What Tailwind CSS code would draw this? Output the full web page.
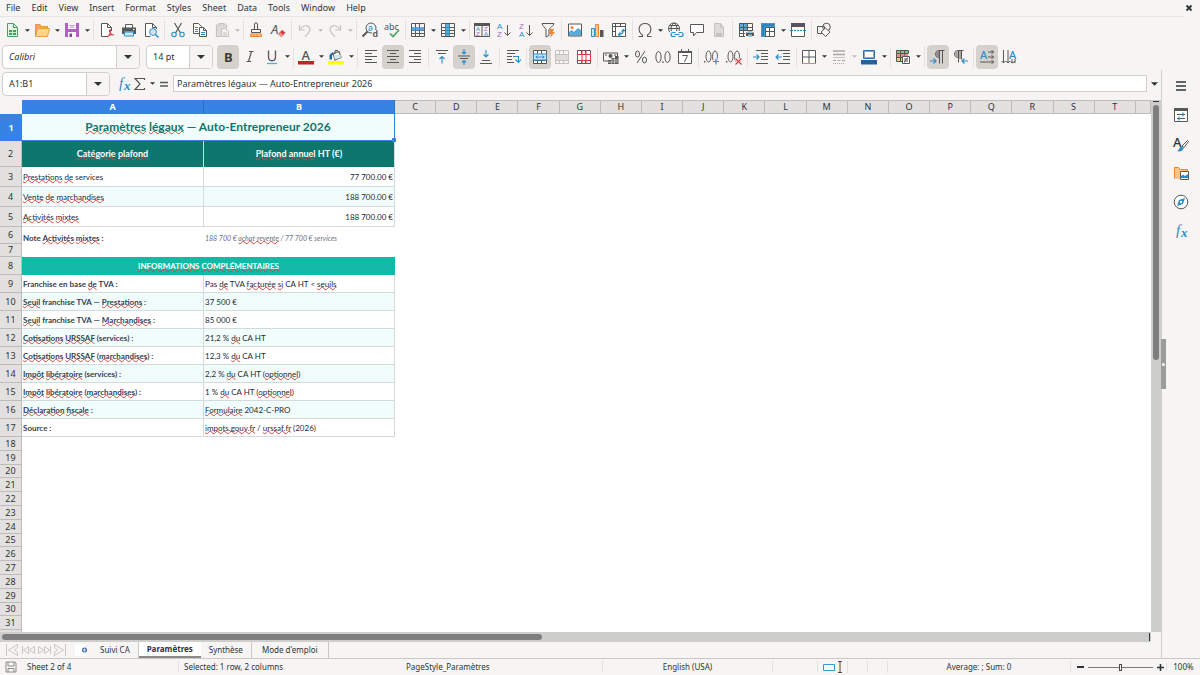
<!DOCTYPE html>
<html lang="en">
<head>
  <meta charset="UTF-8">
  <meta name="viewport" content="width=device-width, initial-scale=1.0">
  <title>Suivi CA - Calc</title>
  <script src="https://cdn.jsdelivr.net/npm/@tailwindcss/browser@4"></script>
</head>
<body class="bg-[#f6f5f4] font-['Noto_Sans',sans-serif] text-[9px] leading-3 text-[#2e3436]">
  <div class="h-screen flex flex-col overflow-hidden">
    <!-- Menu bar -->
    <div class="flex items-center justify-between h-4 shrink-0 pl-1.5 pr-[7px]">
      <nav id="menu" class="flex gap-[11px]"></nav>
      <button aria-label="Close" class="w-2 h-2 flex items-center justify-center">
        <svg class="w-2 h-2" viewBox="0 0 8 8" fill="none" stroke="#2e3436" stroke-width="1.8"><path d="M1.5 1.5l5 5M6.5 1.5l-5 5"/></svg>
      </button>
    </div>

    <!-- Standard toolbar -->
    <div id="standardBar" class="flex items-center h-[27px] shrink-0 pl-px mr-4 border-t border-[#e6e5e3]"></div>

    <!-- Formatting toolbar -->
    <div class="flex items-center h-[27px] shrink-0 pl-0.5">
      <div class="flex h-6 w-[138px] mr-1.5 rounded border border-[#d3d0cc] bg-white overflow-hidden">
        <input aria-label="Font name" value="Calibri" class="min-w-0 flex-1 px-1.5 italic outline-none">
        <button aria-label="Font list" class="w-[23px] flex items-center justify-center bg-[#f6f5f4] border-l border-[#d3d0cc]"><svg class="w-2 h-1" viewBox="0 0 8 4"><path d="M0 0h8L4 4z" fill="#2e3436"/></svg></button>
      </div>
      <div class="flex h-6 w-[67px] mr-1 rounded border border-[#d3d0cc] bg-white overflow-hidden">
        <input aria-label="Font size" value="14 pt" class="min-w-0 flex-1 px-1.5 outline-none">
        <button aria-label="Size list" class="w-[23px] flex items-center justify-center bg-[#f6f5f4] border-l border-[#d3d0cc]"><svg class="w-2 h-1" viewBox="0 0 8 4"><path d="M0 0h8L4 4z" fill="#2e3436"/></svg></button>
      </div>
      <div id="formatBar" class="flex items-center"></div>
    </div>

    <div class="flex flex-1 min-h-0">
      <div class="flex flex-col flex-1 min-w-0">
        <!-- Formula bar -->
        <div class="flex items-center h-[27px] shrink-0 pl-0.5 mb-[3px]">
          <div class="flex h-6 w-[108px] shrink-0 rounded border border-[#d3d0cc] bg-white overflow-hidden">
            <input aria-label="Name box" value="A1:B1" class="min-w-0 flex-1 px-1.5 outline-none">
            <button aria-label="Name list" class="w-[23px] flex items-center justify-center bg-[#f6f5f4] border-l border-[#d3d0cc]"><svg class="w-2 h-1" viewBox="0 0 8 4"><path d="M0 0h8L4 4z" fill="#2e3436"/></svg></button>
          </div>
          <div id="formulaBar" class="flex items-center w-[63px] shrink-0 pl-1.5"></div>
          <input aria-label="Formula" value="Paramètres légaux — Auto-Entrepreneur 2026" class="flex-1 min-w-0 h-[17px] px-[3px] bg-white border border-[#d3d0cc] outline-none">
          <button aria-label="Expand formula bar" class="w-3.5 h-4 flex items-center justify-center"><svg class="w-[7px] h-1" viewBox="0 0 8 4"><path d="M0 0h8L4 4z" fill="#2e3436"/></svg></button>
        </div>

        <!-- Sheet -->
        <div class="flex flex-1 min-h-0">
          <div class="flex-1 min-w-0 overflow-hidden bg-white">
            <table class="w-full table-fixed border-separate border-spacing-0">
              <colgroup id="cols"></colgroup>
              <thead><tr id="colHeads" class="h-3.5"></tr></thead>
              <tbody id="rows"></tbody>
            </table>
          </div>
          <!-- Vertical scroll bar -->
          <div class="w-2.5 shrink-0 bg-[#cdcdcc] flex flex-col items-center pt-px">
            <div class="w-1.5 h-px mb-[3px] bg-[#2e3436]"></div>
            <div class="w-1.5 h-[48%] rounded-full bg-[#7d7e7d]"></div>
          </div>
        </div>

        <!-- Horizontal scroll bar -->
        <div class="flex items-center justify-between h-2.5 shrink-0 mr-2.5 pl-0.5 pr-px bg-[#cdcdcc]">
          <div class="w-[47%] h-1.5 rounded-full bg-[#7d7e7d]"></div>
          <div class="w-px h-2 bg-[#2e3436]"></div>
        </div>

        <!-- Sheet tabs -->
        <div class="flex items-center h-4 shrink-0 pl-1.5 text-[8px]">
          <svg class="w-[61px] h-3.5 mr-2" viewBox="0 0 61 14" fill="none" stroke="#c9c8c6" stroke-width="1">
            <path d="M.5 1v12M11.500 1.500v3l-3 2.500 3 2.500v3L2.500 7zM16.500 3v8M22.500 3.500v7L17.500 7zM28.500 3.500v7L23.500 7zM32.500 3.500v7L37.500 7zM38.500 3.500v7L43.500 7zM44.500 3v8M48.500 1.500v3l3 2.500-3 2.500v3l9-5.500zM59.500 1v12"/>
          </svg>
          <button aria-label="Add sheet" class="w-3 h-3.5 mr-[13px]">
            <svg class="w-3 h-3.5" viewBox="0 0 12 14"><path d="M0 1h10v12H0z" fill="#fff"/><circle cx="9.500" cy="7" r="2.500" fill="#3a6fb5"/><path d="M9.500 5.500v3M8 7h3" stroke="#fff" stroke-width=".8"/></svg>
          </button>
          <button class="h-4 pr-2 border-r border-[#c9c8c6]">Suivi CA</button>
          <button class="h-4 w-[62px] bg-white border-b-2 border-[#8a8a88] font-bold">Paramètres</button>
          <button class="h-4 px-2 border-r border-[#c9c8c6]">Synthèse</button>
          <button class="h-4 px-2.5 border-r border-[#c9c8c6]">Mode d'emploi</button>
        </div>
      </div>

      <!-- Sidebar -->
      <aside class="relative w-[39px] shrink-0 border-l border-[#d0cfcd]">
        <div id="sidebar" class="flex flex-col items-center pt-px"></div>
        <button aria-label="Hide sidebar" class="absolute -left-px top-[269px] w-[5px] h-[50px] bg-[#9b9b9a] flex items-center justify-center">
          <span class="w-[3px] h-[3px] rounded-full bg-white"></span>
        </button>
      </aside>
    </div>

    <!-- Status bar -->
    <div class="flex items-center h-[17px] shrink-0 border-t border-[#c9c8c6] text-[8px]">
      <div class="w-[22px] flex justify-center">
        <svg class="w-3 h-3" viewBox="0 0 12 12" fill="none" stroke="#8e8e8c"><path d="M1 1h9l1 1v9H1zM3 1v4h6V1M3 11V7.500h6V11"/></svg>
      </div>
      <div class="w-[157px] pl-[5px] border-r border-[#e3e2e0]">Sheet 2 of 4</div>
      <div class="w-[222px] pl-[5px]">Selected: 1 row, 2 columns</div>
      <div class="w-[202px] pl-[5px] border-r border-[#e3e2e0]">PageStyle_Paramètres</div>
      <div class="w-[170px] text-center border-r border-[#e3e2e0]">English (USA)</div>
      <div class="w-[45px] h-3 border-r border-[#e3e2e0]"></div>
      <div class="w-[30px] h-3 flex items-center justify-center gap-0.5 border-r border-[#e3e2e0]">
        <svg class="w-3 h-2" viewBox="0 0 12 8" fill="none" stroke="#3d96c9"><path d="M.5 1.500h11v6H.5z"/></svg>
        <svg class="w-1.5 h-3" viewBox="0 0 6 12" fill="none" stroke="#4a4a48"><path d="M1 .5h4M3 .5v11M1 11.500h4"/></svg>
      </div>
      <div class="w-5 h-3 border-r border-[#e3e2e0]"></div>
      <div class="w-5 h-3 border-r border-[#e3e2e0]"></div>
      <div class="flex-1 text-center border-r border-[#e3e2e0]">Average: ; Sum: 0</div>
      <div class="flex items-center gap-1 w-24 pl-1.5 border-r border-[#e3e2e0]">
        <button aria-label="Zoom out" class="w-[7px] h-2 flex items-center"><span class="w-[7px] h-0.5 bg-[#2e3436]"></span></button>
        <div class="relative w-[65px] h-px bg-[#7a7a78]">
          <span class="absolute left-[31px] -top-[3px] w-[3px] h-[7px] border border-[#4a4a48] bg-[#f6f5f4]"></span>
        </div>
        <button aria-label="Zoom in" class="w-[7px] h-2 flex items-center">
          <svg class="w-[7px] h-[7px]" viewBox="0 0 7 7" stroke="#2e3436" stroke-width="1.600"><path d="M0 3.500h7M3.500 0v7"/></svg>
        </button>
      </div>
      <div class="w-[33px] text-center">100%</div>
    </div>
  </div>

  <script>
    // Icon shapes, all on a 16x16 canvas
    const K = '#575755', B = '#2a8ccb', G = '#45a35c', O = '#ed8733', R = '#d83b3b', P = '#b35fc4', X = '#c4c3c1';
    const line = (d, c = K, w = 1) => `<path d="${d}" fill="none" stroke="${c}" stroke-width="${w}"/>`;
    const fill = (d, c) => `<path d="${d}" fill="${c}"/>`;
    const letter = (x, y, s, c, size, extra = '') => `<text x="${x}" y="${y}" fill="${c}" font-size="${size}" ${extra}>${s}</text>`;
    const arial = 'font-family="Liberation Sans"';
    const grid = (c = K) => line('M1.500 1.500h13v13h-13zM1.500 5.500h13M1.500 8.500h13M1.500 11.500h13M5.500 1.500v13M9.500 1.500v13', c);

    const icons = {
      new: fill('M3 1h7l4 4v10H3z', '#eaf6ec') + line('M3.500 1.500h6l4 4v9h-10zM9.500 1.500v4h4', G) + fill('M5 8h7v5H5z', G) + line('M5 10.500h7M8.500 8v5', '#fff', .7),
      open: fill('M1 2h5l1.500 2H14v10H1z', '#f3a64e') + fill('M3.500 6H16l-2.500 8.500H1z', '#fbd48d') + line('M1.500 14V2.500h4.500l1.500 2h6V6M3.500 6.500h12l-2 8h-12z', '#e8963a', .9),
      save: fill('M1 1h14v14H1z', '#b45fc6') + fill('M4 1h8v6H4z', '#fff') + line('M5.500 3.500h5M5.500 5.200h5', '#b45fc6', .7) + fill('M4 10h8v5H4z', '#fff') + fill('M5.500 11.500h2.500V15H5.500z', '#8d3f9f'),
      pdf: fill('M2 1h8l3 4v10H2z', '#fff') + line('M9 14.500H2.500v-13h6l4 4V9M8.500 1.500v4h4') + line('M8 15c2-1 3.500-4 3.500-6.500 0-1-1.200-1 -1 .3.5 2.500 2.300 4.200 4.500 4.200 0 0-4-1-7 2', R, 1.100),
      print: fill('M4 2h8v4H4z', '#fff') + line('M4.500 6V2.500h7V6') + fill('M1 5.500h14V12h-2v-2H3v2H1z', K) + fill('M3.500 9.500h9V14h-9z', '#cfe6f6') + line('M3.500 10h9v4h-9z', B) + fill('M12 7h1.500v1H12z', '#fff'),
      preview: fill('M2 1h7l4 4v10H2z', '#fff') + line('M13.500 7V5.500l-4-4h-7v13h5M9.500 1.500v4h4') + '<circle cx="10" cy="10" r="3.400" fill="#cfe6f6" stroke="#2a8ccb"/>' + line('M12.500 12.500l3 3', B, 1.500),
      cut: line('M4.500 1l6 10M11.500 1l-6 10', K, 1.200) + '<g fill="none" stroke="#2a8ccb" stroke-width="1.100"><circle cx="4" cy="12.500" r="2.200"/><circle cx="12" cy="12.500" r="2.200"/></g>',
      copy: fill('M1 2h6l2 2v8H1z', '#fff') + line('M1.500 1.500h5l3 3v7h-8z') + line('M3 5.500h3M3 7.500h3M3 9.500h3', B) + fill('M7 5h5l3 3v7H7z', '#fff') + line('M7.500 5.500h4l3 3v6h-7zM11.500 5.500v3h3') + line('M9 10.500h4M9 12.500h4', B),
      paste: line('M2.500 3h10v11.500h-10zM5 3.500V1.500h5v2z', X, 1.200) + fill('M3 3.500h9V14H3z', '#dddcda') + fill('M7 6h5l3 3v6H7z', '#f3f2f0') + line('M7.500 6.500h4l3 3v5h-7zM9 11h4M9 13h4', X),
      brush: line('M6.500 7V2c0-1.500 3-1.500 3 0v5') + line('M3.500 7.500h9v3h-9z') + fill('M3 11h10l1 4H2z', '#f6b97a') + line('M3.500 10.500l-1 4h11l-1-4M6 12v2.500M9 12v2.500', O),
      clear: letter(1, 12, 'A', K, 13, 'font-style="italic"') + fill('M8 12l4-4 3.500 2.500-4 4.500z', R) + fill('M8 12l2-2 3.300 3-1.800 2z', '#f08a8a'),
      undo: line('M2.500 3v5h5M3 7.500C5 4 9 2.500 11.500 4.500c3.500 3 .5 6.500-3.500 10', X, 1.100),
      redo: line('M13.500 3v5h-5M13 7.500C11 4 7 2.500 4.500 4.500 1 7.500 4 11 8 14.500', X, 1.100),
      find: '<circle cx="9" cy="6" r="5" fill="#eef6fb" stroke="#575755"/>' + line('M5.500 9.500l-5 5', K, 2) + letter(6, 8.500, 'a', B, 9, arial) + fill('M10 8h6v8h-6z', '#f6f5f4') + letter(10.500, 15, 'd', K, 9, arial + ' font-weight="bold"'),
      spell: letter(0, 8, 'abc', K, 9) + line('M6 11.500l3 3 6-6.500', G, 1.600),
      row: grid() + fill('M2 5h12v3.500H2z', '#56aee0') + line('M5.500 5v3.500M9.500 5v3.500', B),
      col: grid() + fill('M5.500 2h4v12h-4z', '#56aee0') + line('M5.500 5.500h4M5.500 8.500h4M5.500 11.500h4', B),
      sort: fill('M0 1h16v3H0z', K) + line('M.5 1.500h15v13H.5zM8 4v11') + letter(2, 9, 'A', B, 6, arial) + letter(2, 14, 'Z', P, 6, arial) + letter(10, 9, 'Z', P, 6, arial) + letter(10, 14, 'A', B, 6, arial),
      asc: letter(1, 7, 'A', B, 8, arial) + letter(1, 15, 'Z', P, 8, arial) + line('M11.500 3v10M8.500 10.500l3 3 3-3'),
      desc: letter(1, 7, 'Z', P, 8, arial) + letter(1, 15, 'A', B, 8, arial) + line('M11.500 3v10M8.500 10.500l3 3 3-3'),
      filter: line('M2 1.500h12c0 2-5 5-5 6v6l-3 1.500V7.500c0-1-4-4-4-6z') + fill('M10 7h4l-1.500 3H15l-5 6 1-4H9z', O),
      image: fill('M1 2h14v12H1z', '#fff') + '<circle cx="5" cy="5.500" r="1.500" fill="#ed8733"/>' + fill('M1.500 13.500V11l3-2.500 2.500 2 4-4 3.500 3v4z', '#56aee0') + line('M1.500 2h13v12h-13z') + line('M1.500 11l3-2.500 2.500 2 4-4 3.500 3', B, .8),
      chart: fill('M2 6h3v9H2z', '#cfe6f6') + line('M2.500 6.500h3v8h-3z', B) + fill('M6 2h4v13H6z', '#fbc38e') + line('M6.500 2.500h3v12h-3z', O) + fill('M11 8h3.500v7H11z', K),
      pivot: fill('M1 1h14v14H1z', '#fff') + line('M1.500 1.500h13v13h-13zM4.500 1.500v13M1.500 4.500h13M9.500 1.500v3M1.500 9.500h3') + line('M7.500 12.500c3 0 5-2 5-5M9.500 10.500l-2 2 2 2M10.500 9.500l2-2 2 2', B, 1.200),
      omega: line('M1.500 14.500h4v-1.500C0 9.500 1.500 1.500 8 1.500s8 8 2.500 11.500v1.500h4', K, 1.100),
      link: '<g fill="none" stroke="#575755"><circle cx="7" cy="6.500" r="5.500"/><path d="M1.500 6.500h11M2.500 3.500h9M7 1c-4 3-4 8 0 11M7 1c4 3 4 8 0 11"/></g>' + fill('M3 9h13v7H3z', '#f6f5f4') + line('M8.500 10.500H6a2 2 0 000 4h2.500M11.500 10.500H14a2 2 0 010 4h-2.500M7.500 12.500h5', B, 1.200),
      comment: fill('M1 2h14v9H7l-3 4v-4H1z', '#fff') + line('M1.500 2.500h13v8H7.500L4.500 14v-3.500h-3z'),
      headers: fill('M3 1h7l3 4v10H3z', '#dddcda') + line('M3.500 1.500h6l3 4v9h-9zM9.500 1.500v4h3', X) + fill('M5 11h6v3H5z', X),
      printArea: fill('M1 1h9v8H1z', '#56aee0') + fill('M10 1h4v13h-4zM1 9h9v5H1z', '#fff') + grid() + fill('M7 9h9v7H7z', '#f6f5f4') + fill('M8 10.500h8V14H8z', K) + fill('M10 9h4v2h-4zM10 12.500h4V15h-4z', '#8fc6ea'),
      freeze: fill('M5 4.500h10V15H5z', '#fff') + line('M1.500 1.500h13v13h-13zM5.500 1.500v13M9.500 1.500v13M1.500 5.500h13M1.500 9.500h13') + fill('M1 1h14v4H5v10H1z', '#3f9bd6') + line('M3 3v11M3 3h11', '#1b6ca8'),
      split: fill('M1 1h14v4H1z', K) + fill('M2 5h12v9H2z', '#fff') + line('M1.500 2v12.500h13V2') + line('M0 8.500h16', B, 1.200) + line('M3 8.500h1M6 8.500h1M9 8.500h1M12 8.500h1', '#fff'),
      draw: '<circle cx="10.500" cy="5" r="3.800" fill="#f6f5f4" stroke="#575755"/>' + line('M1.500 4.500h7v7h-7z') + '<path d="M9.500 6l4.500 4-4.500 4.500L5 10z" fill="#f6f5f4" stroke="#575755"/>',

      bold: letter(4, 12.500, 'B', '#3b3b39', 13, 'font-weight="bold"'),
      italic: line('M7 2.500h4.500M4.500 12.500H9M9.500 2.500l-3 10', K, 1.200),
      underline: line('M4.500 1.500v6.500c0 5 7 5 7 0V1.500', K, 1.300) + line('M3 14.500h10', '#56aee0', 1.300),
      color: letter(3.500, 10.500, 'A', K, 13, 'font-weight="500"') + fill('M0 12h16v3.500H0z', '#c9211e'),
      highlight: line('M5 4.500l6-2 2 6-6 2.500z', K, 1.200) + fill('M5.500 6.500l7-1 .5 3-6 2z', '#cfe6f6') + line('M7 5V1.500h3', K) + fill('M1.500 10.500V6l3-3 1 1.500-1.500 2v4z', '#1b6ca8') + fill('M0 12h16v3.500H0z', '#ffff00'),
      left: line('M2 1.500h12M2 4.500h7M2 7.500h12M2 10.500h7M2 13.500h12'),
      center: line('M2 1.500h12M5 4.500h6M2 7.500h12M5 10.500h6M2 13.500h12'),
      right: line('M2 1.500h12M7 4.500h7M2 7.500h12M7 10.500h7M2 13.500h12'),
      top: line('M2 1.500h12M4 4.500h8') + line('M8 14.500V7.500M5.500 10L8 7.500l2.500 2.500', B, 1.100),
      middle: line('M2 7h12M4 9.500h8') + line('M8 0v5M6 3l2 2 2-2M8 16v-4.500M6 13.500l2-2 2 2', B, 1.100),
      bottom: line('M4 11.500h8M2 14.500h12') + line('M8 1v7M5.500 5.500L8 8l2.500-2.500', B, 1.100),
      wrap: line('M2 1.500h12M2 4.500h8M2 7.500h5M2 10.500h5M2 13.500h7') + line('M8 7.500h5.500v5M10.500 10.500l3 3 2.500-3', B, 1.100),
      merge: fill('M1 1h14v14H1z', '#fff') + grid() + fill('M2 5h12v6H2z', '#cfe6f6') + line('M1.500 5h13v6h-13zM3.500 8h9M5.500 6.500L4 8l1.500 1.500M10.500 6.500L12 8l-1.500 1.500', B),
      mergeCells: grid(X) + fill('M2 6h12v5H2z', '#dddcda') + line('M1.500 5.500h13v6h-13z', X),
      unmerge: fill('M1 1h14v14H1z', '#fff') + grid() + fill('M1 5h14v6H1z', '#fff') + line('M1.500 5.500h13v6h-13zM6 5.500v6M10 5.500v6M6 12v3M10 12v3M6 1v4M10 1v4', R),
      currency: line('M.5 4h14v8H.5z') + '<circle cx="7.500" cy="7" r="2" fill="#575755"/>' + line('M2 6h2M11 6h2') + fill('M5 11h3v4H5zM8.500 9h3v6h-3zM12 7h3.500v8H12z', K) + line('M5 13h10M9 11h6', '#f6f5f4', .7),
      percent: '<g fill="none" stroke="#575755"><ellipse cx="4.500" cy="5" rx="2" ry="3"/><ellipse cx="11.500" cy="11" rx="2" ry="3"/></g>' + line('M12 2L4 14'),
      number: '<g fill="none" stroke="#575755"><ellipse cx="3.500" cy="8" rx="2.600" ry="5.500"/><ellipse cx="12.500" cy="8" rx="2.600" ry="5.500"/></g>' + fill('M7.300 12.500h1.400v1.500H7.300z', K),
      date: fill('M1 2h14v13H1z', '#fff') + line('M1.500 2.500h13v12h-13zM4.500 0v3M11.500 0v3') + fill('M1 2h14v2H1z', K) + line('M5.500 6.500h5l-3 6.500'),
      addDec: fill('M0 12h1.400v1.500H0z', K) + '<g fill="none" stroke="#575755"><ellipse cx="4.500" cy="7.500" rx="2.500" ry="5.500"/><ellipse cx="11" cy="7.500" rx="2.500" ry="5.500"/></g>' + line('M12 9v6.500M8.800 12.500h6.500', '#f6f5f4', 3) + line('M12 9.500v6M9 12.500h6', B, 1.200),
      delDec: fill('M0 12h1.400v1.500H0z', K) + '<g fill="none" stroke="#575755"><ellipse cx="4.500" cy="7.500" rx="2.500" ry="5.500"/><ellipse cx="11" cy="7.500" rx="2.500" ry="5.500"/></g>' + line('M9.500 9.500l6 6M15.500 9.500l-6 6', '#f6f5f4', 3) + line('M9.500 9.500l6 6M15.500 9.500l-6 6', R, 1.100),
      indent: line('M3 1.500h12M8 4.500h7M8 7.500h7M8 10.500h7M3 14.500h12') + line('M0 8h6M3.500 5.500L6 8l-2.500 2.500', B, 1.100),
      outdent: line('M3 1.500h12M8 4.500h7M8 7.500h7M8 10.500h7M3 14.500h12') + line('M7 8H1M3.500 5.500L1 8l2.500 2.500', B, 1.100),
      borders: fill('M1 1h14v14H1z', '#fff') + line('M1.500 14.500v-13h13v13M8 1.500v13M1.500 8h13') + line('M1 14.500h14', O),
      lineStyle: line('M2 2h12M2 5.500h12', '#a8a7a5', 1.600) + line('M2 8.500h12', X) + line('M2 11.500h3M6.500 11.500h3M11 11.500h3M2 14.500h1M4 14.500h1M6 14.500h1M8 14.500h1M10 14.500h1M12 14.500h1', '#a8a7a5'),
      lineColor: fill('M2 1h12v9H2z', '#fff') + line('M2.500 1.500h11v8h-11z', '#2a6fb0') + line('M3.500 2.500h9v6h-9z', '#6d8fae', .8) + fill('M0 11h16v4.500H0z', '#2a5f9e'),
      condition: fill('M1 1h12v3H1z', '#7cc48c') + fill('M1 5h12v3H1z', '#f08a8a') + fill('M1 9h6v3H1z', '#fbc38e') + line('M1.500 1.500h12v3h-12zM1.500 4.500v8h6M1.500 8.500h6M5.500 1.500v11M9.500 1.500v5') + fill('M7 7h9v9H7z', '#fff') + line('M7.500 7.500h7v7h-7zM9 10h4M9 12h4M12.500 8.500l-3 5'),
      ltr: line('M14.500 1.500H9a3.200 3.200 0 000 7M9.500 1.500v13M12.500 1.500v13') + fill('M9 2a3 3 0 000 6z', '#8e8e8c') + line('M0 12h5.500M3.500 9.500L6 12l-2.500 2.500', B, 1.200),
      rtl: line('M11.500 1.500H6a3.200 3.200 0 000 7M6.500 1.500v12M9.500 1.500v9') + fill('M6 2a3 3 0 000 6zM7 2h2v8H7z', '#a8a7a5') + line('M16 12h-5.500M12.500 9.500L10 12l2.500 2.500', B, 1.200),
      horizontal: letter(1, 10, 'A', B, 11, 'font-weight="500"') + line('M9 3h6M9 8h6M1 13h14M12.500 1l2 2-2 2M12.500 6l2 2-2 2M12.500 11l2 2-2 2'),
      vertical: letter(8, 9.500, 'A', B, 11, 'font-weight="500"') + line('M2.500 1v13M7 1v13M11 10v4M14 10v4M.5 12l2 2 2-2M5 12l2 2 2-2M9.500 12.500l1.500 1.500 3-1.500'),

      fx: '<text x="3" y="12" fill="#2a8ccb" font-size="15" font-style="italic" font-family="Liberation Serif">f<tspan x="8" y="14" font-size="13" font-weight="bold">x</tspan></text>',
      sum: line('M12.500 4V2.500H3L8 8l-5 5.500h9.500V12', K, 1.200),
      equals: line('M4 6.500h8M4 10h8', K, 1.500),

      menu: line('M3 4h10M3 8h10M3 12h10', '#2e3436', 1.500),
      properties: fill('M1 1h14v14H1z', '#fff') + line('M1.500 1.500h13v13h-13z') + fill('M1 1h14v3H1z', K) + line('M4 7.500h8M4 11.500h8') + line('M10 5.500v4M6 9.500v4', B, 1.200),
      styles: letter(0, 11, 'A', '#2e3436', 13, 'font-weight="500"') + '<path d="M14.500 4.500l1 1-4.500 6-2-1.500z" fill="#fff" stroke="#575755"/>' + fill('M4 15c2 0 2-4 4.500-4.500l2 1.500c0 3-4 4-6.500 3z', B),
      gallery: fill('M1 2h5l1 2h8v10H1z', '#f9c58a') + line('M1.500 13.500v-11h4l1.500 2h7.500v2', O) + fill('M7 6h9v9H7z', '#fff') + fill('M8 13v-2l2-1.500 2 1.500 3-2v4z', B) + line('M7.500 6.500h8v8h-8z'),
      navigator: '<circle cx="8" cy="8" r="6.800" fill="#fff" stroke="#575755"/>' + fill('M12 4l-2 6-6 2 2-6z', B) + '<circle cx="8" cy="8" r="1.200" fill="#fff"/>'
    };

    const svg = name => `<svg class="w-4 h-4 shrink-0 overflow-visible" viewBox="0 0 16 16">${icons[name]}</svg>`;
    const caret = muted => `<span class="w-2 flex justify-center"><svg class="w-[5px] h-[3px]" viewBox="0 0 6 3"><path d="M0 0h6L3 3z" fill="${muted ? '#bbbab8' : '#2e3436'}"/></svg></span>`;

    // "+" after a name adds a caret, "-" a greyed caret, "!" a pressed look; "|" and ":" are wide and narrow separators
    function buildBar(id, items) {
      document.getElementById(id).innerHTML = items.split(' ').map(item => {
        if (item === '|') return '<span class="w-[5px] h-5 flex justify-center"><span class="w-px bg-[#e3e2e0]"></span></span>';
        if (item === ':') return '<span class="w-1 h-5 flex justify-center"><span class="w-px bg-[#e3e2e0]"></span></span>';
        const name = item.replace(/[+!-]/g, '');
        const look = item.includes('!') ? 'bg-[#d5d2ce] rounded' : '';
        const arrow = item.includes('+') ? caret(false) : item.includes('-') ? caret(true) : '';
        return `<button aria-label="${name}" class="flex items-center h-6 ${look}"><span class="w-[22px] flex justify-center">${svg(name)}</span>${arrow}</button>`;
      }).join('');
    }

    buildBar('standardBar', 'new+ open+ save+ | pdf print preview | cut copy paste- : brush clear | undo- redo- | find spell : row+ col+ : sort asc desc filter | image chart pivot : omega+ link comment headers | printArea freeze+ split : draw');
    buildBar('formatBar', 'bold! italic underline+ : color+ highlight+ | left center! right | top middle! bottom | wrap | merge! mergeCells unmerge | currency+ percent number date | addDec delDec | indent outdent : borders+ lineStyle- lineColor+ : condition+ | ltr! rtl | horizontal! vertical');
    document.getElementById('formulaBar').innerHTML =
      `<button aria-label="Function wizard">${svg('fx')}</button>` +
      `<button aria-label="Sum" class="flex items-center">${svg('sum')}${caret(false)}</button>` +
      `<button aria-label="Formula">${svg('equals')}</button>`;

    document.getElementById('menu').innerHTML = ['File', 'Edit', 'View', 'Insert', 'Format', 'Styles', 'Sheet', 'Data', 'Tools', 'Window', 'Help']
      .map(name => `<a href="#">${name}</a>`).join('');

    document.getElementById('sidebar').innerHTML = ['menu', 'properties', 'styles', 'gallery', 'navigator', 'fx']
      .map(name => `<button aria-label="${name}" class="h-[29px] flex items-center">${svg(name)}</button>`).join('');

    // Columns
    const letters = 'CDEFGHIJKLMNOPQRST'.split('');
    document.getElementById('cols').innerHTML = '<col class="w-[22px]"><col class="w-[182px]"><col class="w-[191px]">' +
      letters.map(() => '<col>').join('') + '<col class="w-[15px]">';
    const plainHead = 'p-0 font-normal bg-[#e2e1df] border-t border-r border-b border-[#bdbcba]';
    document.getElementById('colHeads').innerHTML = '<td class="bg-[#f6f5f4]"></td>' +
      ['A', 'B'].map(l => `<th class="p-0 bg-[#3584e4] border-r border-[#2a6fc4] text-white font-bold">${l}</th>`).join('') +
      letters.concat('').map(l => `<th class="${plainHead}">${l}</th>`).join('');

    // Text between asterisks is marked by the spell checker
    const spell = text => text.replace(/\*(.+?)\*/g, '<span class="underline decoration-wavy decoration-[#e0403a] decoration-1 -underline-offset-1 [text-decoration-skip-ink:none]">$1</span>');

    const info = [
      ['Franchise en base *de* TVA :', 'Pas *de* TVA *facturée* *si* CA HT &lt; *seuils*'],
      ['*Seuil* franchise TVA — *Prestations* :', '37 500 €'],
      ['*Seuil* franchise TVA — *Marchandises* :', '85 000 €'],
      ['*Cotisations* *URSSAF* (services) :', '21,2 % *du* CA HT'],
      ['*Cotisations* *URSSAF* (*marchandises*) :', '12,3 % *du* CA HT'],
      ['*Impôt* *libératoire* (services) :', '2,2 % *du* CA HT (*optionnel*)'],
      ['*Impôt* *libératoire* (*marchandises*) :', '1 % *du* CA HT (*optionnel*)'],
      ['*Déclaration* *fiscale* :', '*Formulaire* 2042-C-PRO'],
      ['Source :', '*impots.gouv.fr* / *urssaf.fr* (2026)']
    ];
    const limits = [
      ['*Prestations* *de* services', '77 700.00 €'],
      ['*Vente* *de* *marchandises*', '188 700.00 €'],
      ['*Activités* *mixtes*', '188 700.00 €']
    ];

    const cell = "px-px py-0 whitespace-nowrap font-['Lato',sans-serif]";
    const rule = 'text-[8px] border-r border-b border-[#d5d9dc]';
    const rows = [
      ['h-[27px]', `<td colspan="2" class="${cell} relative bg-[#f0fdfa] border-r border-b border-[#3584e4] text-center text-[12px] leading-4 font-bold text-[#0f766e]">${spell('*Paramètres* *légaux* — Auto-Entrepreneur 2026')}<span class="absolute -right-0.5 -bottom-0.5 w-1 h-1 bg-[#3584e4]"></span></td>`],
      ['h-[26px]', ['*Catégorie* *plafond*', '*Plafond* *annuel* HT (€)'].map(t => `<td class="${cell} bg-[#0f766e] border-r border-[#d5d9dc] text-center font-bold text-white">${spell(t)}</td>`).join('')],
      ...limits.map(([a, b], i) => ['h-5', `<td class="${cell} ${rule} ${i % 2 ? 'bg-[#f0fdfa]' : ''} text-[#1f2937]">${spell(a)}</td><td class="${cell} ${rule} ${i % 2 ? 'bg-[#f0fdfa]' : ''} text-right text-[#1f2937]">${b}</td>`]),
      ['h-[17px]', `<td class="${cell} align-bottom text-[8px] font-bold text-[#374151]">${spell('Note *Activités* *mixtes* :')}</td><td class="${cell} align-bottom text-[7px] italic text-[#6b7280]">${spell('188 700 € *achat-revente* / 77 700 € services')}</td>`],
      ['h-[13px]', '<td></td><td></td>'],
      ['h-[18px]', `<td colspan="2" class="${cell} bg-[#14b8a6] text-center text-[8px] font-bold text-white">${spell('*INFORMATIONS* *COMPLÉMENTAIRES*')}</td>`],
      ...info.map(([a, b], i) => ['h-[18px]', `<td class="${cell} ${rule} ${i % 2 ? 'bg-[#f0fdfa]' : ''} font-bold text-[#374151]">${spell(a)}</td><td class="${cell} ${rule} ${i % 2 ? 'bg-[#f0fdfa]' : ''} text-[#1f2937]">${spell(b)}</td>`])
    ];
    // Empty rows below the data; every fifth one is a pixel shorter
    for (let n = 18; n <= 31; n++) rows.push([n % 5 ? 'h-3.5' : 'h-[13px]', '']);

    document.getElementById('rows').innerHTML = rows.map(([height, cells], i) => {
      const head = i === 0 ? 'p-0 bg-[#3584e4] text-white font-bold' : 'p-0 bg-[#e2e1df] border-r border-b border-[#bdbcba] font-normal';
      return `<tr class="${height}"><th class="${head}">${i + 1}</th>${cells}</tr>`;
    }).join('') + '<tr class="h-3.5"><th class="bg-[#e2e1df] border-r border-[#bdbcba]"></th></tr>';
  </script>
</body>
</html>
